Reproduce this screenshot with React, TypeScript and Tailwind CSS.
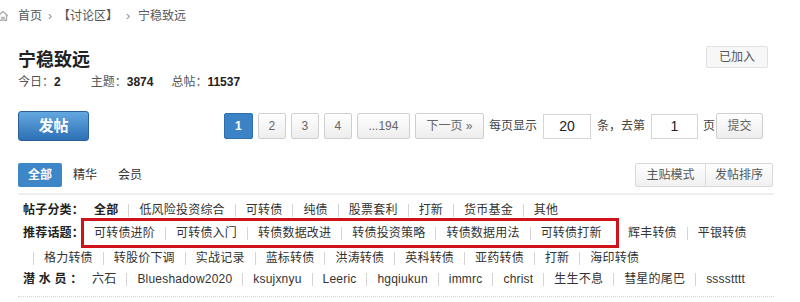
import React from "react";

const font = { fontFamily: '"Liberation Sans", "Noto Sans CJK SC", sans-serif' };

const cats = ["全部", "低风险投资综合", "可转债", "纯债", "股票套利", "打新", "货币基金", "其他"];
const boxed = ["可转债进阶", "可转债入门", "转债数据改进", "转债投资策略", "转债数据用法", "可转债打新"];
const moreTopics = ["辉丰转债", "平银转债"];
const topicsRow3 = ["格力转债", "转股价下调", "实战记录", "蓝标转债", "洪涛转债", "英科转债", "亚药转债", "打新", "海印转债"];
const lurkers = ["六石", "Blueshadow2020", "ksujxnyu", "Leeric", "hgqiukun", "immrc", "christ", "生生不息", "彗星的尾巴", "sssstttt"];

function Sep() {
  return <span className="mx-[10px] h-[13px] w-px shrink-0 bg-[#d5d5d5]" />;
}

function Items({ list, boldFirst = false, leadSep = false }: { list: string[]; boldFirst?: boolean; leadSep?: boolean }) {
  return (
    <>
      {list.map((t, i) => (
        <React.Fragment key={t + i}>
          {(i > 0 || leadSep) && <Sep />}
          <span className={boldFirst && i === 0 ? "shrink-0 font-bold text-[#222]" : "shrink-0"}>{t}</span>
        </React.Fragment>
      ))}
    </>
  );
}

function PageBtn({ children, active = false, w }: { children: React.ReactNode; active?: boolean; w: string }) {
  return (
    <span
      className={
        (active
          ? "flex h-[26px] items-center justify-center rounded-[2px] border border-[#2f6fae] bg-[#3c83c5] font-bold text-white "
          : "flex h-[26px] items-center justify-center rounded-[2px] border border-[#cfcfcf] bg-gradient-to-b from-white to-[#ededed] text-[#666] ") + w
      }
    >
      {children}
    </span>
  );
}

export default function App() {
  return (
    <div className="h-[302px] w-[800px] overflow-hidden whitespace-nowrap bg-white text-[12px] text-[#333]" style={font}>
      {/* breadcrumb */}
      <div className="flex h-[32px] items-center text-[12px] text-[#555]">
        <svg width="10" height="10" viewBox="0 0 10 10" className="-ml-[2px] mr-[10px]">
          <path d="M0 5 L5 0.5 L10 5 M1.5 4 V9.5 H4 V6.5 H6 V9.5 H8.5 V4" fill="none" stroke="#aaa" strokeWidth="1.3" />
        </svg>
        <span>首页</span>
        <span className="mx-[6px] text-[#888]">›</span>
        <span>【讨论区】</span>
        <span className="mx-[8px] text-[#888]">›</span>
        <span>宁稳致远</span>
      </div>

      <div className="ml-[18px] w-[756px]">
        {/* header */}
        <div className="flex items-start justify-between pt-[14px]">
          <div>
            <div className="flex h-[28px] items-center text-[18px] font-bold text-[#222]">宁稳致远</div>
            <div className="flex h-[16px] items-center text-[12px] text-[#555]">
              <span>今日：</span>
              <b className="text-[#222]">2</b>
              <span className="ml-[30px]">主题：</span>
              <b className="text-[#222]">3874</b>
              <span className="ml-[18px]">总帖：</span>
              <b className="text-[#222]">11537</b>
            </div>
          </div>
          <span className="mr-[6px] flex h-[22px] w-[62px] items-center justify-center rounded-[2px] border border-[#e2e2e2] bg-[#f7f7f7] text-[#555]">
            已加入
          </span>
        </div>

        {/* actions + pagination */}
        <div className="mt-[21px] flex items-center">
          <span className="flex h-[30px] w-[71px] items-center justify-center rounded-[3px] border border-[#2b5f97] bg-gradient-to-b from-[#64a8e0] to-[#2d70b5] text-[15px] font-bold text-white">
            发帖
          </span>
          <div className="ml-auto mr-[11px] flex items-center">
            <PageBtn active w="w-[29px]">1</PageBtn>
            <span className="ml-[5px]"><PageBtn w="w-[28px]">2</PageBtn></span>
            <span className="ml-[5px]"><PageBtn w="w-[28px]">3</PageBtn></span>
            <span className="ml-[5px]"><PageBtn w="w-[28px]">4</PageBtn></span>
            <span className="ml-[5px]"><PageBtn w="w-[53px]">...194</PageBtn></span>
            <span className="ml-[5px]"><PageBtn w="w-[69px]">下一页 »</PageBtn></span>
            <span className="ml-[5px] text-[#444]">每页显示</span>
            <span className="ml-[6px] flex h-[25px] w-[48px] items-center justify-center border border-[#d5d5d5] text-[14px] text-[#222]">20</span>
            <span className="mx-[6px] text-[#444]">条，去第</span>
            <span className="flex h-[25px] w-[47px] items-center justify-center border border-[#d5d5d5] text-[14px] text-[#222]">1</span>
            <span className="ml-[5px] text-[#444]">页</span>
            <span className="ml-[1px] flex h-[26px] w-[47px] items-center justify-center rounded-[2px] border border-[#cfcfcf] bg-gradient-to-b from-white to-[#ededed] text-[#666]">
              提交
            </span>
          </div>
        </div>

        {/* tabs */}
        <div className="mt-[22px] flex items-center">
          <span className="flex h-[24px] w-[44px] items-center justify-center rounded-[2px] bg-[#3d87c9] font-bold text-white">全部</span>
          <span className="ml-[11px]">精华</span>
          <span className="ml-[21px]">会员</span>
          <div className="ml-auto mr-[1px] flex h-[24px] overflow-hidden rounded-[2px] border border-[#d8d8d8] bg-gradient-to-b from-white to-[#f0f0f0] text-[#555]">
            <span className="flex w-[70px] items-center justify-center border-r border-[#dcdcdc]">主贴模式</span>
            <span className="flex w-[66px] items-center justify-center">发帖排序</span>
          </div>
        </div>
        <div className="mt-[6px] h-[2px] bg-[#efefef]" />

        {/* filters */}
        <div className="mt-[5px] pl-[5px] text-[12px] tracking-[0.2px]">
          <div className="flex h-[20px] items-center">
            <span className="w-[58px] shrink-0 font-bold text-[#222]">帖子分类：</span>
            <span className="ml-[13px] flex items-center">
              <Items list={cats} boldFirst />
            </span>
          </div>
          <div className="-mt-[2px] flex h-[30px] items-center">
            <span className="w-[58px] shrink-0 font-bold text-[#222]">推荐话题：</span>
            <span className="flex h-[30px] w-[538px] shrink-0 items-center border-[3px] border-[#d0121b] pl-[10px]">
              <Items list={boxed} />
            </span>
            <span className="ml-[9px] flex items-center">
              <Items list={moreTopics} />
            </span>
          </div>
          <div className="flex h-[20px] items-center">
            <Items list={topicsRow3} leadSep />
          </div>
          <div className="flex h-[22px] items-center">
            <span className="w-[58px] shrink-0 font-bold text-[#222]">潜 水 员 ：</span>
            <span className="ml-[11px] flex items-center">
              <Items list={lurkers} />
            </span>
          </div>
        </div>
        <div className="mt-[6px] border-t border-dotted border-[#d5d5d5]" />
      </div>
    </div>
  );
}
